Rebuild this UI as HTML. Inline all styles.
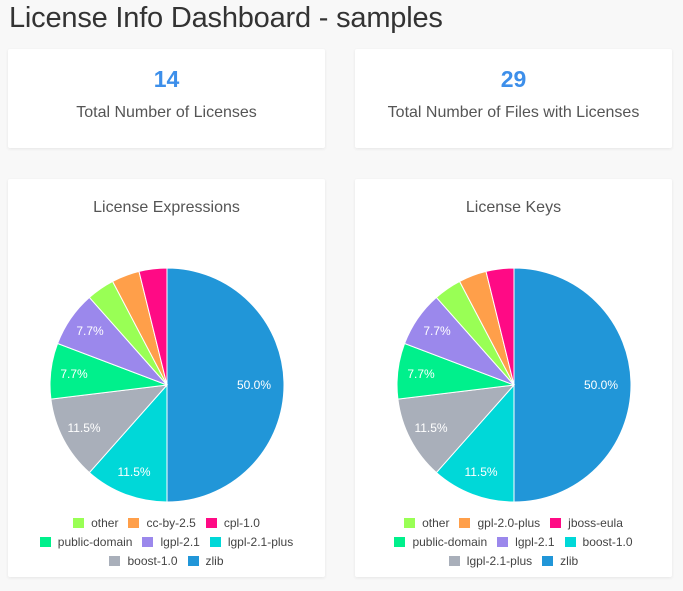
<!DOCTYPE html>
<html><head><meta charset="utf-8"><style>
body{margin:0;width:683px;height:591px;background:#f8f8f8;font-family:"Liberation Sans",sans-serif;position:relative;overflow:hidden;color:#444}
h1{position:absolute;left:9px;top:2px;margin:0;font-weight:normal;font-size:29px;color:#333;letter-spacing:-0.2px}
.card{position:absolute;background:#fff;box-shadow:0 1px 3px rgba(0,0,0,.08);border-radius:2px}
.num{position:absolute;width:100%;text-align:center;top:17px;font-size:23px;font-weight:bold;color:#3d8fea}
.lbl{position:absolute;width:100%;text-align:center;top:55px;font-size:16px;color:#555}
.ttl{position:absolute;width:100%;text-align:center;top:20px;font-size:16px;color:#555}
.leg{position:absolute;width:100%;text-align:center;font-size:12px;color:#444}
.leg span{display:inline-block;margin:0 5px}
.leg i{display:inline-block;width:11px;height:10px;margin-right:7px;vertical-align:-1px}
</style></head><body>
<h1>License Info Dashboard - samples</h1>
<div class="card" style="left:8px;top:49px;width:317px;height:99px"><div class="num">14</div><div class="lbl">Total Number of Licenses</div></div>
<div class="card" style="left:355px;top:49px;width:317px;height:99px"><div class="num">29</div><div class="lbl">Total Number of Files with Licenses</div></div>

<div class="card" style="left:8px;top:179px;width:317px;height:398px"><div class="ttl">License Expressions</div>
<div class="leg" style="top:337px"><span><i style="background:#99ff55"></i>other</span><span><i style="background:#ff9f4a"></i>cc-by-2.5</span><span><i style="background:#ff0a85"></i>cpl-1.0</span></div>
<div class="leg" style="top:356px"><span><i style="background:#00f08c"></i>public-domain</span><span><i style="background:#9b88ec"></i>lgpl-2.1</span><span><i style="background:#00d8d8"></i>lgpl-2.1-plus</span></div>
<div class="leg" style="top:375px"><span><i style="background:#a9afba"></i>boost-1.0</span><span><i style="background:#2196d8"></i>zlib</span></div>
</div>
<div class="card" style="left:355px;top:179px;width:317px;height:398px"><div class="ttl">License Keys</div>
<div class="leg" style="top:337px"><span><i style="background:#99ff55"></i>other</span><span><i style="background:#ff9f4a"></i>gpl-2.0-plus</span><span><i style="background:#ff0a85"></i>jboss-eula</span></div>
<div class="leg" style="top:356px"><span><i style="background:#00f08c"></i>public-domain</span><span><i style="background:#9b88ec"></i>lgpl-2.1</span><span><i style="background:#00d8d8"></i>boost-1.0</span></div>
<div class="leg" style="top:375px"><span><i style="background:#a9afba"></i>lgpl-2.1-plus</span><span><i style="background:#2196d8"></i>zlib</span></div>
</div>

<svg width="683" height="591" style="position:absolute;left:0;top:0" font-family="Liberation Sans" font-size="12" fill="#fff">
<defs><g id="pie" stroke="#fff" stroke-width="1">
<path d="M0 0 L0 -117 A117 117 0 0 1 0 117 Z" fill="#2196d8"/>
<path d="M0 0 L0 117 A117 117 0 0 1 -77.6 87.6 Z" fill="#00d8d8"/>
<path d="M0 0 L-77.6 87.6 A117 117 0 0 1 -116.1 14.1 Z" fill="#a9afba"/>
<path d="M0 0 L-116.1 14.1 A117 117 0 0 1 -109.4 -41.5 Z" fill="#00f08c"/>
<path d="M0 0 L-109.4 -41.5 A117 117 0 0 1 -77.6 -87.6 Z" fill="#9b88ec"/>
<path d="M0 0 L-77.6 -87.6 A117 117 0 0 1 -54.4 -103.6 Z" fill="#99ff55"/>
<path d="M0 0 L-54.4 -103.6 A117 117 0 0 1 -28 -113.6 Z" fill="#ff9f4a"/>
<path d="M0 0 L-28 -113.6 A117 117 0 0 1 0 -117 Z" fill="#ff0a85"/>
</g>
<g id="lab" stroke="none" fill="#fff">
<text x="87" y="4" text-anchor="middle">50.0%</text>
<text x="-33" y="91" text-anchor="middle">11.5%</text>
<text x="-83" y="47" text-anchor="middle">11.5%</text>
<text x="-93" y="-7" text-anchor="middle">7.7%</text>
<text x="-77" y="-50" text-anchor="middle">7.7%</text>
</g></defs>
<g transform="translate(167,385)"><use href="#pie"/><use href="#lab"/></g>
<g transform="translate(514,385)"><use href="#pie"/><use href="#lab"/></g>
</svg>
</body></html>
